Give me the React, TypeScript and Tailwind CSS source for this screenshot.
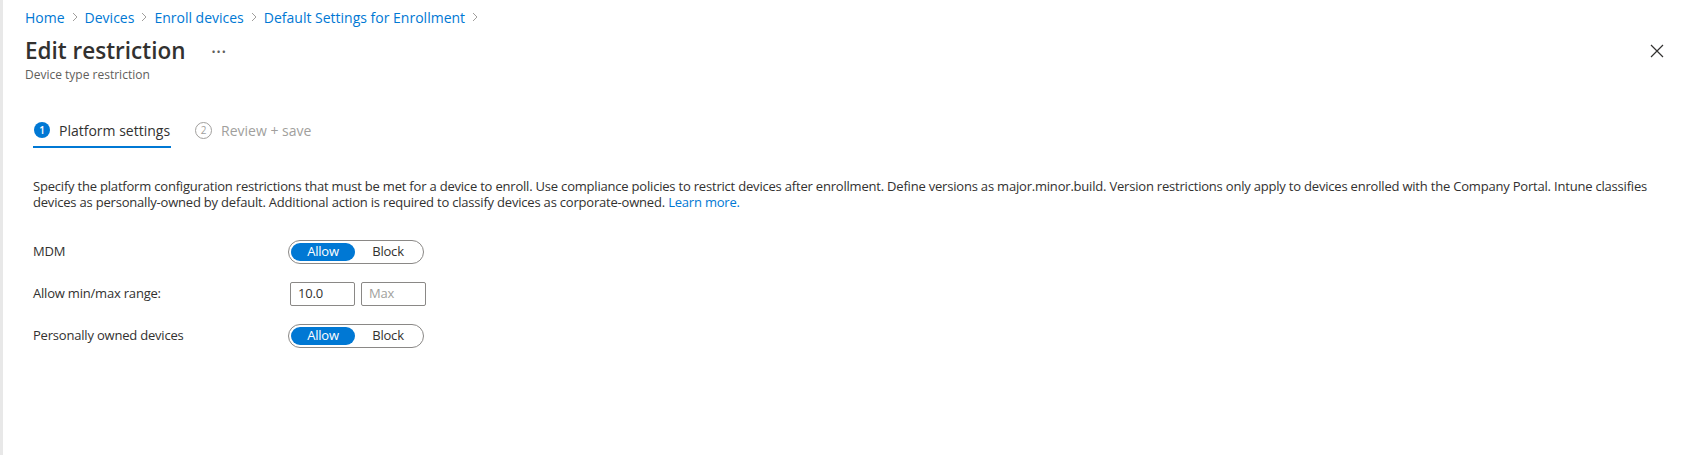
import React from "react";

const font = { fontFamily: '"Open Sans", "Noto Sans", sans-serif' };

function Toggle() {
  return (
    <div className="flex h-[24px] w-[136px] items-center rounded-full border border-[#8a8886] p-[2px]">
      <div className="flex h-[18px] w-[64px] items-center justify-center rounded-full bg-[#0078d4] text-[13px] tracking-[-0.2px] text-white">
        Allow
      </div>
      <div className="flex flex-1 items-center justify-center text-[13px] tracking-[-0.2px] text-[#323130]">Block</div>
    </div>
  );
}

function Row({ label, children }: { label: string; children: React.ReactNode }) {
  return (
    <div className="flex h-[42px] items-center">
      <div className="w-[255px] text-[13px] tracking-[-0.2px] text-[#323130]">{label}</div>
      {children}
    </div>
  );
}

export default function App() {
  return (
    <div className="flex h-[455px] w-[1688px] bg-white" style={font}>
      <div className="w-[3px] shrink-0 bg-[#e8e8e8]" />
      <div className="flex flex-1 flex-col">
        <div className="pl-[22px] pt-[7px]">
          <div className="flex h-[20px] items-center gap-[7px] text-[14px] text-[#0078d4]">
            <span>Home</span>
            <Chevron />
            <span>Devices</span>
            <Chevron />
            <span>Enroll devices</span>
            <Chevron />
            <span>Default Settings for Enrollment</span>
            <Chevron />
          </div>
          <div className="mt-[8px] flex h-[32px] items-center justify-between pr-[24px]">
            <div className="flex items-center">
              <h1 className="text-[22.5px] font-semibold leading-[32px] text-[#323130]">Edit restriction</h1>
              <span className="ml-[26px] text-[11px] leading-none tracking-[1px] text-[#605e5c]">•••</span>
            </div>
            <svg width="14" height="14" viewBox="0 0 14 14" className="text-[#323130]">
              <path d="M1 1 L13 13 M13 1 L1 13" stroke="currentColor" strokeWidth="1.2" />
            </svg>
          </div>
          <div className="h-[16px] text-[12px] leading-[16px] text-[#605e5c]">Device type restriction</div>
        </div>

        <div className="pl-[30px] pr-[30px]">
          <div className="mt-[31px] flex items-end">
            <div className="flex h-[34px] items-center gap-[9px] border-b-2 border-[#0078d4] pl-[1px] pr-[1px]">
              <div className="flex h-[16px] w-[16px] items-center justify-center rounded-full bg-[#0078d4] text-[10px] font-semibold text-white">
                1
              </div>
              <span className="text-[14px] text-[#323130]">Platform settings</span>
            </div>
            <div className="ml-[24px] flex h-[34px] items-center gap-[9px] border-b-2 border-transparent">
              <div className="flex h-[17px] w-[17px] items-center justify-center rounded-full border border-[#a19f9d] text-[10px] text-[#a19f9d]">
                2
              </div>
              <span className="text-[14px] text-[#a19f9d]">Review + save</span>
            </div>
          </div>

          <p className="mt-[30px] text-[13px] leading-[16px] tracking-[-0.2px] text-[#323130]">
            Specify the platform configuration restrictions that must be met for a device to enroll. Use compliance
            policies to restrict devices after enrollment. Define versions as major.minor.build. Version restrictions
            only apply to devices enrolled with the Company Portal. Intune classifies
            <br />
            devices as personally-owned by default. Additional action is required to classify devices as
            corporate-owned. <span className="text-[#0078d4]">Learn more.</span>
          </p>

          <div className="mt-[21px] flex flex-col">
            <Row label="MDM">
              <Toggle />
            </Row>
            <Row label="Allow min/max range:">
              <div className="ml-[2px] flex gap-[6px]">
                <div className="flex h-[24px] w-[65px] items-center rounded-[2px] border border-[#8a8886] pl-[7px] text-[13px] tracking-[-0.2px] text-[#323130]">
                  10.0
                </div>
                <div className="flex h-[24px] w-[65px] items-center rounded-[2px] border border-[#8a8886] pl-[7px] text-[13px] tracking-[-0.2px] text-[#a19f9d]">
                  Max
                </div>
              </div>
            </Row>
            <Row label="Personally owned devices">
              <Toggle />
            </Row>
          </div>
        </div>
      </div>
    </div>
  );
}

function Chevron() {
  return (
    <svg width="6" height="10" viewBox="0 0 6 10" className="text-[#a19f9d]">
      <path d="M1 1 L5 5 L1 9" fill="none" stroke="currentColor" strokeWidth="1" />
    </svg>
  );
}
